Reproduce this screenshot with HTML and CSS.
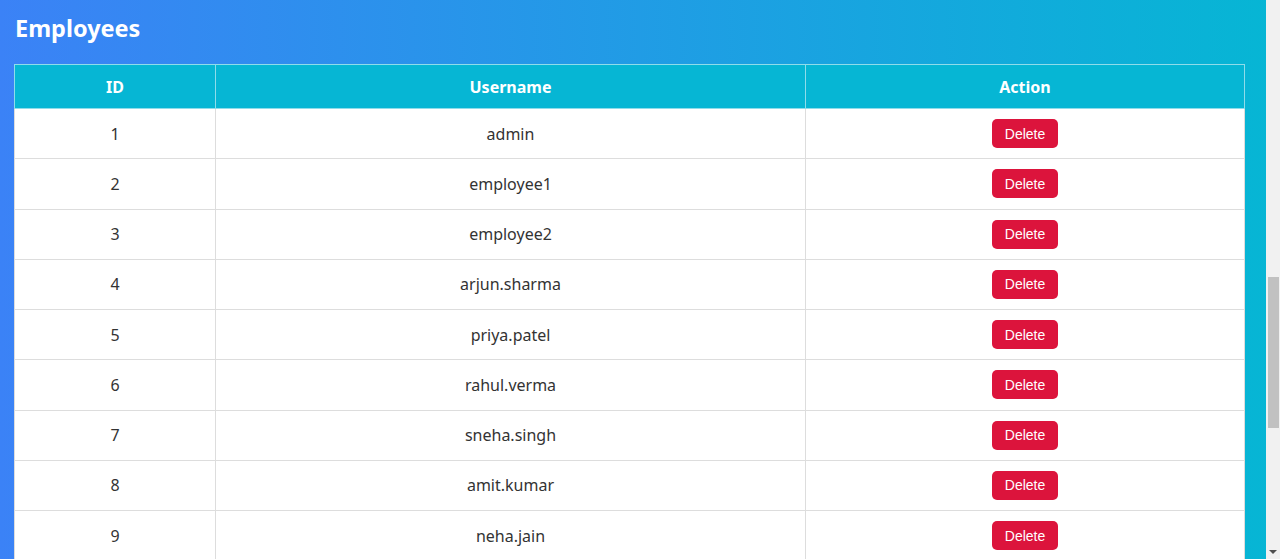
FILE: index.html
```html
<!DOCTYPE html>
<html lang="en">
<head>
<meta charset="utf-8">
<title>Employees</title>
<link rel="stylesheet" href="styles.css">
</head>
<body>
<main class="page">
  <h2 class="title">Employees</h2>
  <table class="emp-table">
    <colgroup>
      <col class="col-id">
      <col class="col-user">
      <col class="col-action">
    </colgroup>
    <thead>
      <tr><th>ID</th><th>Username</th><th>Action</th></tr>
    </thead>
    <tbody>
      <tr><td>1</td><td>admin</td><td><button class="btn-delete">Delete</button></td></tr>
      <tr><td>2</td><td>employee1</td><td><button class="btn-delete">Delete</button></td></tr>
      <tr><td>3</td><td>employee2</td><td><button class="btn-delete">Delete</button></td></tr>
      <tr><td>4</td><td>arjun.sharma</td><td><button class="btn-delete">Delete</button></td></tr>
      <tr><td>5</td><td>priya.patel</td><td><button class="btn-delete">Delete</button></td></tr>
      <tr><td>6</td><td>rahul.verma</td><td><button class="btn-delete">Delete</button></td></tr>
      <tr><td>7</td><td>sneha.singh</td><td><button class="btn-delete">Delete</button></td></tr>
      <tr><td>8</td><td>amit.kumar</td><td><button class="btn-delete">Delete</button></td></tr>
      <tr><td>9</td><td>neha.jain</td><td><button class="btn-delete">Delete</button></td></tr>
    </tbody>
  </table>
</main>
<div class="scrollbar" aria-hidden="true">
  <div class="scroll-track">
    <div class="scroll-thumb"></div>
  </div>
  <div class="scroll-arrow"></div>
</div>
</body>
</html>
```

FILE: styles.css
```css
html, body {
  margin: 0;
  padding: 0;
}
body {
  background: linear-gradient(to right, #3b82f6, #06b6d4);
  font-family: "Noto Sans", "Open Sans", sans-serif;
  height: 559px;
  overflow: hidden;
}
.page {
  padding: 8px 35px 0 14px;
}
.title {
  margin: 0 0 16px 1px;
  font-size: 23.5px;
  line-height: 40px;
  font-weight: 700;
  color: #ffffff;
}
.emp-table {
  width: 1231px;
  border-collapse: collapse;
  background: #ffffff;
  table-layout: fixed;
}
.col-id { width: 201px; }
.col-user { width: 590px; }
.emp-table th,
.emp-table td {
  border: 1px solid #dddddd;
  text-align: center;
  font-size: 16px;
}
.emp-table th {
  background: #06b6d4;
  color: #ffffff;
  font-weight: 700;
  height: 43px;
  padding: 0 12px;
  border-color: #8fdcea;
}
.emp-table td {
  color: #333333;
  height: 49.25px;
  padding: 0 12px;
}
.btn-delete {
  background: #dc143c;
  color: #ffffff;
  border: none;
  border-radius: 5px;
  font-family: "Liberation Sans", Arial, sans-serif;
  font-size: 14px;
  width: 66px;
  height: 29px;
  padding: 0;
  cursor: pointer;
}
.scrollbar {
  position: fixed;
  top: 0;
  right: 0;
  width: 14px;
  height: 559px;
  background: #f1f1f1;
  display: flex;
  flex-direction: column;
}
.scroll-track {
  flex: 1;
  padding-top: 277px;
}
.scroll-thumb {
  margin: 0 1px 0 2px;
  height: 151px;
  background: #c1c1c1;
}
.scroll-arrow {
  height: 15px;
  display: flex;
  align-items: center;
  justify-content: center;
}
.scroll-arrow::before {
  content: "";
  width: 0;
  height: 0;
  border-left: 4px solid transparent;
  border-right: 4px solid transparent;
  border-top: 4px solid #505050;
}
```
